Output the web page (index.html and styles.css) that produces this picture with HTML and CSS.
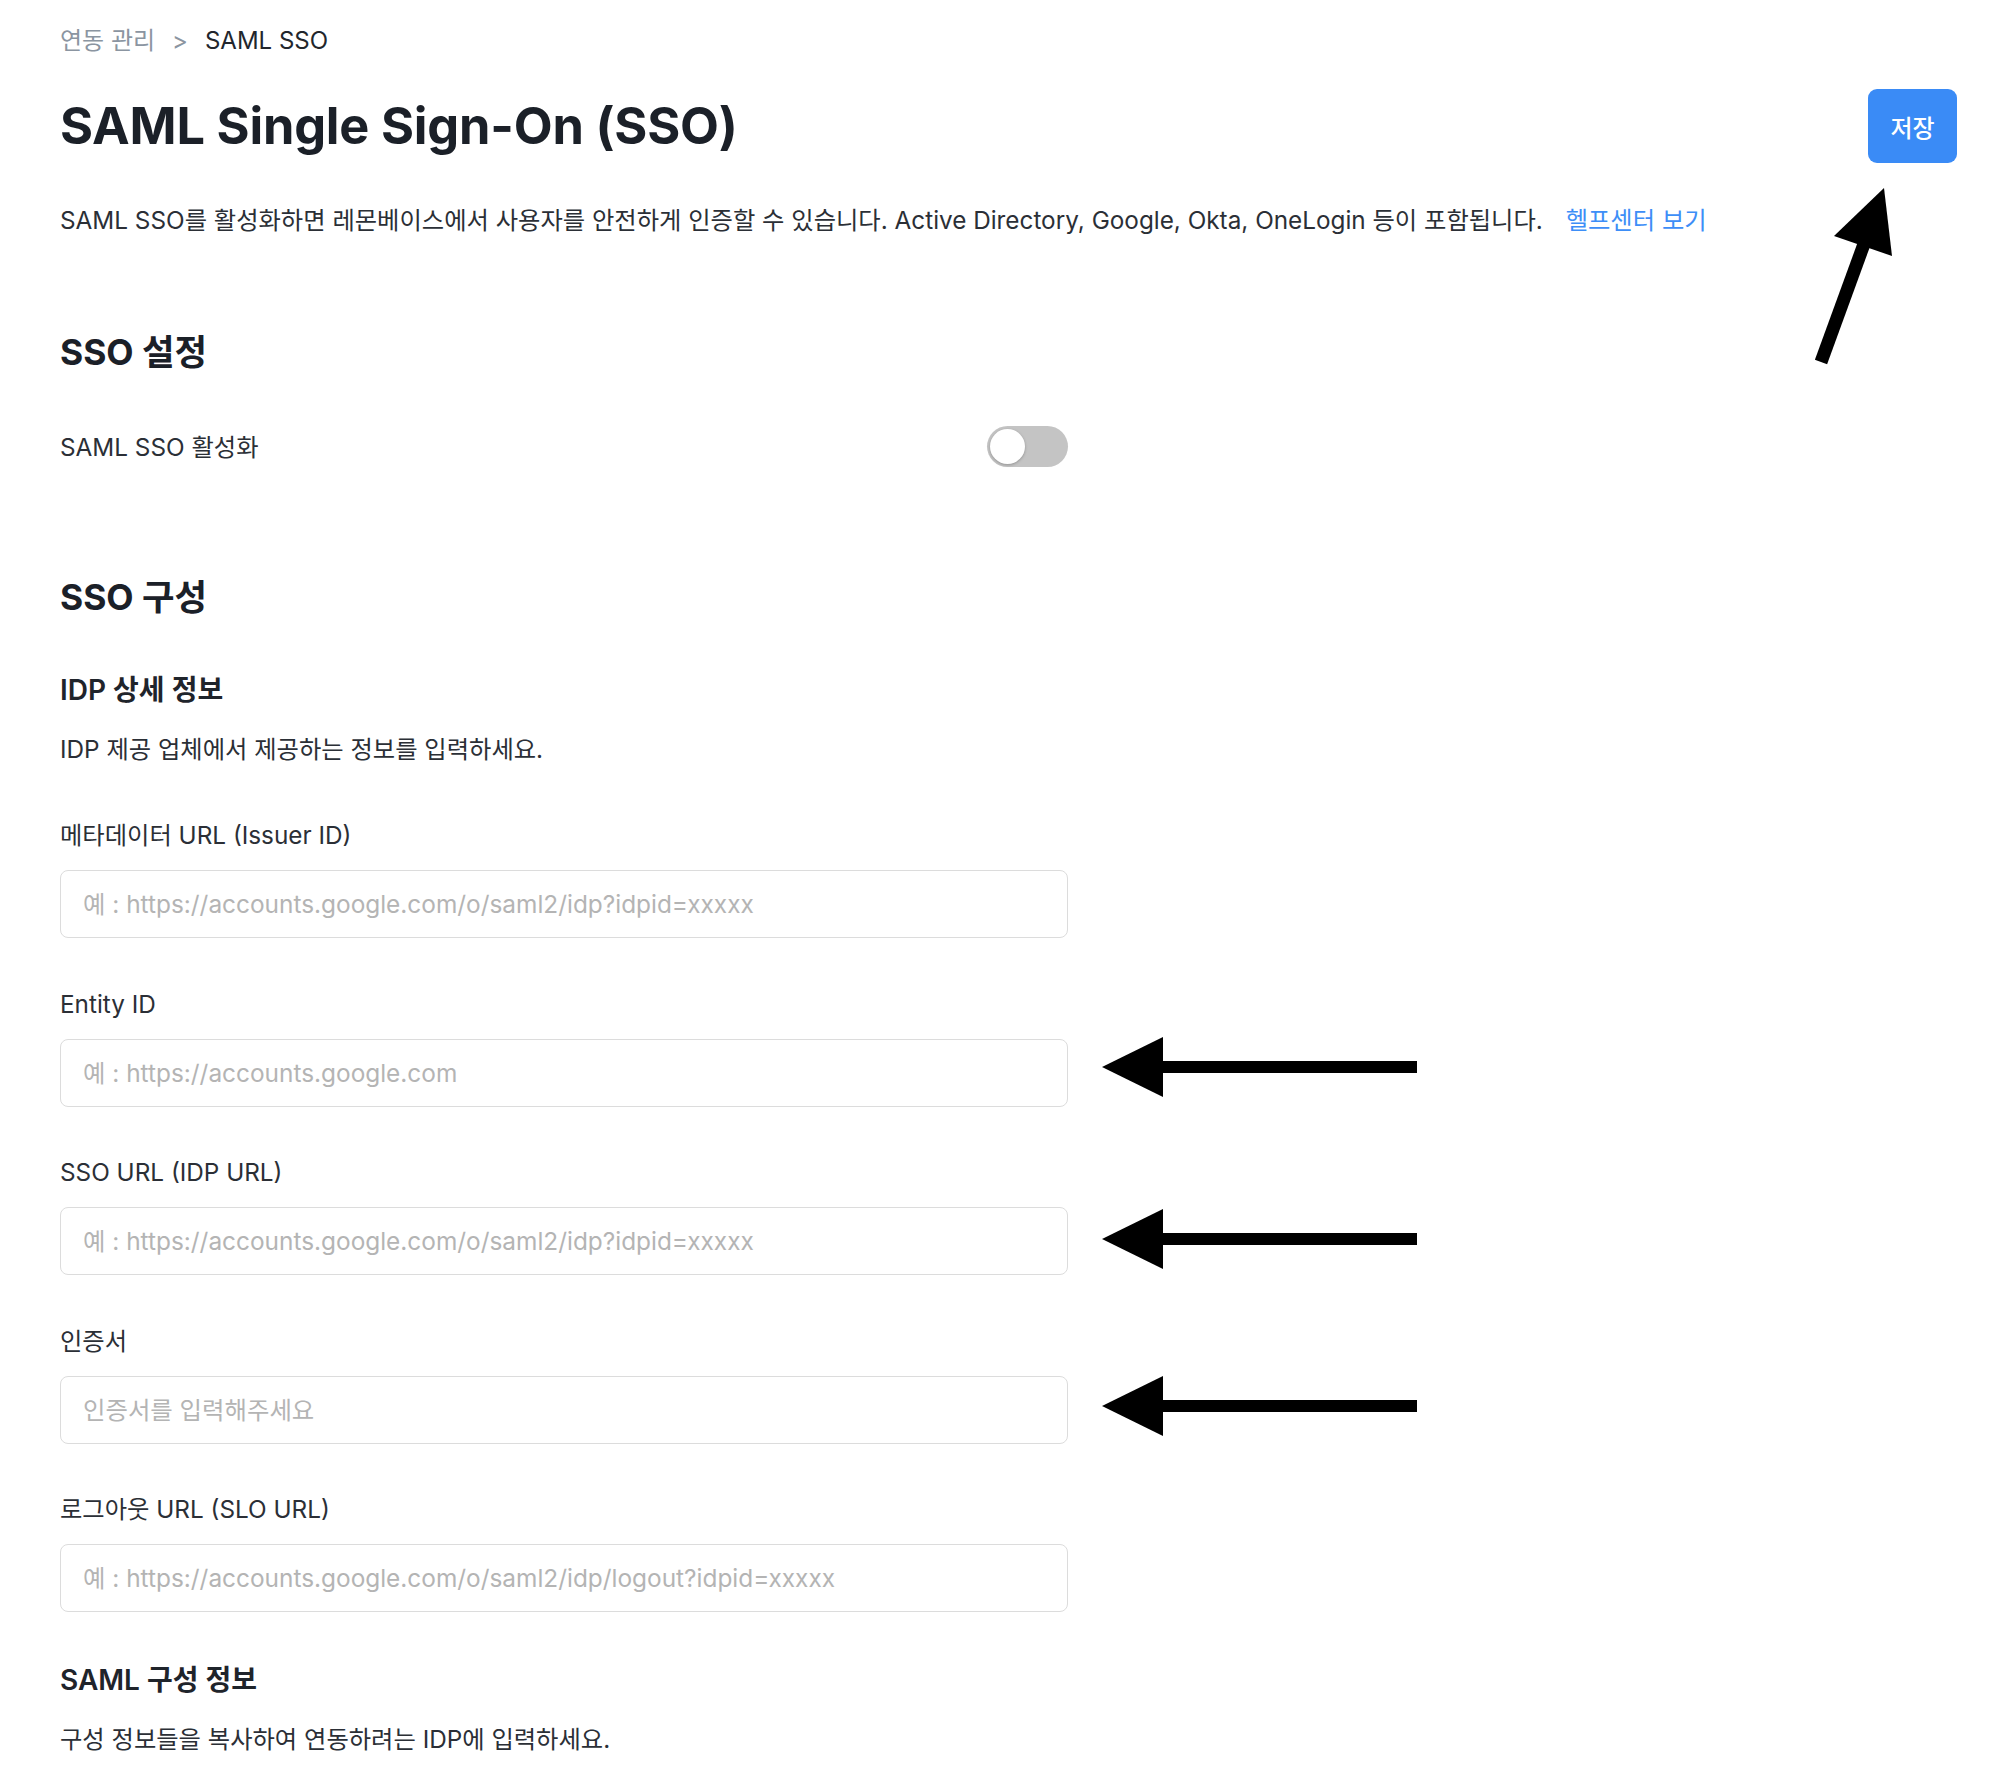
FILE: index.html
```html
<!DOCTYPE html>
<html lang="ko">
<head>
<meta charset="utf-8">
<title>SAML SSO</title>
<link rel="stylesheet" href="styles.css">
</head>
<body>
<div class="page">
  <nav class="breadcrumb">
    <span class="crumb-parent">연동 관리</span>
    <span class="crumb-sep">&gt;</span>
    <span class="crumb-current">SAML SSO</span>
  </nav>

  <header class="header">
    <h1 class="title">SAML Single Sign-On (SSO)</h1>
    <button class="save-btn" type="button">저장</button>
  </header>

  <p class="intro">SAML SSO를 활성화하면 레몬베이스에서 사용자를 안전하게 인증할 수 있습니다. Active Directory, Google, Okta, OneLogin 등이 포함됩니다. <a class="help-link" href="#">헬프센터 보기</a></p>

  <h2 class="section-title first">SSO 설정</h2>
  <div class="toggle-row">
    <span class="toggle-label">SAML SSO 활성화</span>
    <span class="toggle"><span class="knob"></span></span>
  </div>

  <h2 class="section-title second">SSO 구성</h2>
  <h3 class="sub-title">IDP 상세 정보</h3>
  <p class="sub-desc">IDP 제공 업체에서 제공하는 정보를 입력하세요.</p>

  <div class="fields">
    <div class="field">
      <label class="field-label">메타데이터 URL (Issuer ID)</label>
      <input class="field-input" type="text" placeholder="예 : https://accounts.google.com/o/saml2/idp?idpid=xxxxx">
    </div>
    <div class="field">
      <label class="field-label">Entity ID</label>
      <input class="field-input" type="text" placeholder="예 : https://accounts.google.com">
    </div>
    <div class="field">
      <label class="field-label">SSO URL (IDP URL)</label>
      <input class="field-input" type="text" placeholder="예 : https://accounts.google.com/o/saml2/idp?idpid=xxxxx">
    </div>
    <div class="field">
      <label class="field-label">인증서</label>
      <input class="field-input" type="text" placeholder="인증서를 입력해주세요">
    </div>
    <div class="field">
      <label class="field-label">로그아웃 URL (SLO URL)</label>
      <input class="field-input" type="text" placeholder="예 : https://accounts.google.com/o/saml2/idp/logout?idpid=xxxxx">
    </div>
  </div>

  <h3 class="sub-title last">SAML 구성 정보</h3>
  <p class="sub-desc">구성 정보들을 복사하여 연동하려는 IDP에 입력하세요.</p>
</div>

<svg class="annotations" width="2000" height="1773" viewBox="0 0 2000 1773" aria-hidden="true">
  <g fill="#000">
    <polygon points="1102,1067 1163,1037 1163,1097"/>
    <rect x="1160" y="1061" width="257" height="12"/>
    <polygon points="1102,1239 1163,1209 1163,1269"/>
    <rect x="1160" y="1233" width="257" height="12"/>
    <polygon points="1102,1406 1163,1376 1163,1436"/>
    <rect x="1160" y="1400" width="257" height="12"/>
    <polygon points="1884,188 1834,236 1892,256"/>
  </g>
  <line x1="1821" y1="362" x2="1864" y2="244" stroke="#000" stroke-width="13"/>
</svg>
</body>
</html>
```

FILE: styles.css
```css
html, body {
  margin: 0;
  padding: 0;
  background: #ffffff;
}

body {
  font-family: Inter, "Noto Sans CJK KR", "Noto Sans", sans-serif;
  color: #2b2f36;
  width: 2000px;
  min-height: 1773px;
  position: relative;
  overflow: hidden;
}

.page {
  padding: 26px 43px 0 60px;
}

.breadcrumb {
  font-size: 24px;
  line-height: 30px;
  height: 30px;
  display: flex;
  gap: 17px;
}

.crumb-parent { color: #8b95a1; }
.crumb-sep { color: #8b95a1; }
.crumb-current { color: #22262c; }

.header {
  margin-top: 33px;
  height: 74px;
  display: flex;
  align-items: center;
  justify-content: space-between;
}

.title {
  margin: 0;
  font-size: 50.5px;
  font-weight: 700;
  line-height: 74px;
  color: #1b2028;
  letter-spacing: -0.2px;
}

.save-btn {
  width: 89px;
  height: 74px;
  border: none;
  border-radius: 9px;
  background: #3a8bf6;
  color: #ffffff;
  font-family: Inter, "Noto Sans CJK KR", sans-serif;
  font-size: 24px;
  font-weight: 500;
  padding: 0;
}

.intro {
  margin: 40px 0 0;
  font-size: 24.3px;
  line-height: 34px;
  color: #2b2f36;
}

.help-link {
  color: #3d8ef7;
  text-decoration: none;
  margin-left: 16px;
}

.section-title {
  margin: 0;
  font-size: 35.4px;
  font-weight: 700;
  line-height: 44px;
  color: #1b2028;
}

.section-title.first { margin-top: 94px; }
.section-title.second { margin-top: 109px; }

.toggle-row {
  margin-top: 51px;
  width: 1008px;
  height: 41px;
  display: flex;
  align-items: center;
  justify-content: space-between;
}

.toggle-label {
  font-size: 24.3px;
  line-height: 34px;
}

.toggle {
  width: 81px;
  height: 41px;
  border-radius: 21px;
  background: #c4c4c4;
  display: flex;
  align-items: center;
  padding-left: 3px;
  box-sizing: border-box;
}

.knob {
  width: 35px;
  height: 35px;
  border-radius: 50%;
  background: #ffffff;
  box-shadow: 0 1px 3px rgba(0, 0, 0, 0.25);
}

.sub-title {
  margin: 52px 0 0;
  font-size: 28px;
  font-weight: 600;
  line-height: 36px;
  color: #1f242b;
}

.sub-title.last { margin-top: 50px; }

.sub-desc {
  margin: 24px 0 0;
  font-size: 24.3px;
  line-height: 34px;
}

.fields {
  margin-top: 52px;
  width: 1008px;
  display: flex;
  flex-direction: column;
  gap: 48.5px;
}

.field {
  display: flex;
  flex-direction: column;
  gap: 18px;
}

.field-label {
  font-size: 24.3px;
  line-height: 34px;
}

.field-input {
  height: 68px;
  box-sizing: border-box;
  border: 1.5px solid #dcdcdc;
  border-radius: 8px;
  padding: 0 22px;
  font-family: Inter, "Noto Sans CJK KR", sans-serif;
  font-size: 24.4px;
  color: #2b2f36;
  background: #ffffff;
  outline: none;
}

.field-input::placeholder {
  color: #b4b4b4;
}

.annotations {
  position: absolute;
  left: 0;
  top: 0;
  pointer-events: none;
}
```
